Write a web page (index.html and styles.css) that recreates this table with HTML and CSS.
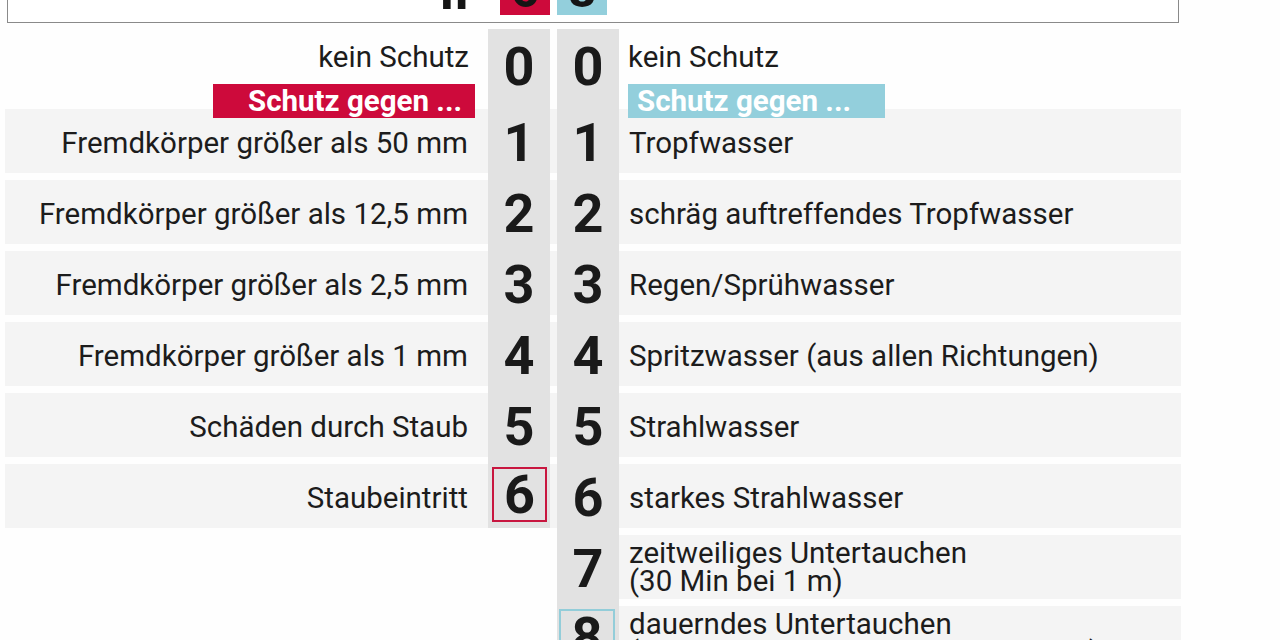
FILE: index.html
```html
<!DOCTYPE html>
<html lang="de">
<head>
<meta charset="utf-8">
<title>IP-Schutzarten</title>
<link rel="stylesheet" href="styles.css">
</head>
<body>
<div class="header">
  <div class="hd-ip">IP</div>
  <div class="hd-box hd-red"><span>6</span></div>
  <div class="hd-gap"></div>
  <div class="hd-box hd-blue"><span>8</span></div>
</div>

<div class="table">
  <div class="band r1"></div>
  <div class="band r2"></div>
  <div class="band r3"></div>
  <div class="band r4"></div>
  <div class="band r5"></div>
  <div class="band r6"></div>
  <div class="band band-right r7"></div>
  <div class="band band-right r8"></div>

  <div class="colbg col-l"></div>
  <div class="colbg col-r"></div>

  <div class="head-l r0">
    <div class="head-text">kein Schutz</div>
    <div class="label label-red">Schutz gegen ...</div>
  </div>
  <div class="num nl r0">0</div>
  <div class="num nr r0">0</div>
  <div class="head-r r0">
    <div class="head-text">kein Schutz</div>
    <div class="label label-blue">Schutz gegen ...</div>
  </div>

  <div class="tl r1">Fremdkörper größer als 50 mm</div>
  <div class="num nl r1">1</div>
  <div class="num nr r1">1</div>
  <div class="tr r1">Tropfwasser</div>

  <div class="tl r2">Fremdkörper größer als 12,5 mm</div>
  <div class="num nl r2">2</div>
  <div class="num nr r2">2</div>
  <div class="tr r2">schräg auftreffendes Tropfwasser</div>

  <div class="tl r3">Fremdkörper größer als 2,5 mm</div>
  <div class="num nl r3">3</div>
  <div class="num nr r3">3</div>
  <div class="tr r3">Regen/Sprühwasser</div>

  <div class="tl r4">Fremdkörper größer als 1 mm</div>
  <div class="num nl r4">4</div>
  <div class="num nr r4">4</div>
  <div class="tr r4">Spritzwasser (aus allen Richtungen)</div>

  <div class="tl r5">Schäden durch Staub</div>
  <div class="num nl r5">5</div>
  <div class="num nr r5">5</div>
  <div class="tr r5">Strahlwasser</div>

  <div class="tl r6">Staubeintritt</div>
  <div class="num nl hl hl-red r6">6</div>
  <div class="num nr r6">6</div>
  <div class="tr r6">starkes Strahlwasser</div>

  <div class="num nr r7">7</div>
  <div class="tr r7">zeitweiliges Untertauchen<br>(30 Min bei 1 m)</div>

  <div class="num nr hl hl-blue r8">8</div>
  <div class="tr r8">dauerndes Untertauchen<br>(nach Absprache, strenger als bei 7)</div>
</div>
</body>
</html>
```

FILE: styles.css
```css
* { box-sizing: border-box; }

html, body {
  margin: 0;
  padding: 0;
  background: #fefefe;
  overflow: hidden;
}

body {
  width: 1280px;
  height: 640px;
  font-family: Roboto, "Liberation Sans", sans-serif;
  color: #1c1c1c;
}

/* ---------- header (cut off at top) ---------- */
.header {
  margin: -45px 0 0 7px;
  width: 1172px;
  padding: 4px 0 7px 0;
  border: 1px solid #8a8a8a;
  border-top: none;
  display: grid;
  grid-template-columns: 480px 62px 7px 62px 1fr;
  align-items: end;
  background: #fff;
}

.hd-ip {
  justify-self: end;
  padding-right: 0;
  margin-bottom: -3px;
  font-weight: 700;
  font-size: 52px;
  line-height: 1;
  color: #151515;
}

.hd-box {
  width: 50px;
  height: 56px;
  display: flex;
  align-items: flex-end;
  justify-content: center;
  font-weight: 700;
  font-size: 50px;
  line-height: 1;
  color: #151515;
}

.hd-red { background: #cd0a3b; justify-self: end; }
.hd-blue { background: #93cfdc; justify-self: start; }

/* ---------- table ---------- */
.table {
  margin: 6px 0 0 5px;
  width: 1176px;
  display: grid;
  grid-template-columns: 483px 62px 7px 62px 562px;
  grid-template-rows: 73px repeat(8, 64px);
  row-gap: 7px;
}

.r0 { grid-row: 1; }
.r1 { grid-row: 2; }
.r2 { grid-row: 3; }
.r3 { grid-row: 4; }
.r4 { grid-row: 5; }
.r5 { grid-row: 6; }
.r6 { grid-row: 7; }
.r7 { grid-row: 8; }
.r8 { grid-row: 9; }

.band {
  grid-column: 1 / -1;
  background: #f4f4f4;
}
.band-right { grid-column: 4 / -1; }

.colbg { background: #e2e2e2; }
.col-l { grid-column: 2; grid-row: 1 / 8; }
.col-r { grid-column: 4; grid-row: 1 / -1; }

/* header row */
.head-l, .head-r {
  align-self: start;
  display: flex;
  flex-direction: column;
}
.head-l {
  grid-column: 1;
  align-items: flex-end;
  padding-right: 13px;
}
.head-r {
  grid-column: 5;
  align-items: flex-start;
  padding-left: 9px;
}
.head-text {
  margin-top: 11px;
  font-size: 29.5px;
  line-height: 34px;
}
.head-l .head-text { margin-right: 6px; }

.label {
  margin-top: 10px;
  height: 34px;
  font-weight: 700;
  font-size: 29.5px;
  line-height: 35px;
  color: #fff;
  white-space: nowrap;
}
.label-red {
  width: 262px;
  background: #cd0a3b;
  text-align: right;
  padding-right: 13px;
}
.label-blue {
  width: 257px;
  background: #93cfdc;
  padding-left: 9px;
}

/* text cells */
.tl, .tr {
  align-self: center;
  font-size: 29.5px;
  line-height: 28px;
  padding-top: 3px;
  white-space: nowrap;
}
.tl {
  grid-column: 1;
  text-align: right;
  padding-right: 20px;
}
.tr {
  grid-column: 5;
  padding-left: 10px;
}
.r7.tr { padding-top: 0; }
.r8.tr { align-self: start; padding-top: 4px; }

/* number cells */
.num {
  align-self: center;
  justify-self: center;
  font-weight: 700;
  font-size: 54px;
  line-height: 1;
  padding-top: 3px;
  color: #1a1a1a;
}
.nl { grid-column: 2; }
.nr { grid-column: 4; }

.hl {
  align-self: start;
  justify-self: start;
  display: flex;
  align-items: center;
  justify-content: center;
  margin-top: 3px;
  padding-top: 0;
  border: 2px solid;
}
.hl-red {
  width: 55px;
  height: 55px;
  margin-left: 4px;
  border-color: #c8163f;
}
.hl-blue {
  width: 56px;
  height: 56px;
  margin-left: 2px;
  border-color: #93cdd9;
}
```
